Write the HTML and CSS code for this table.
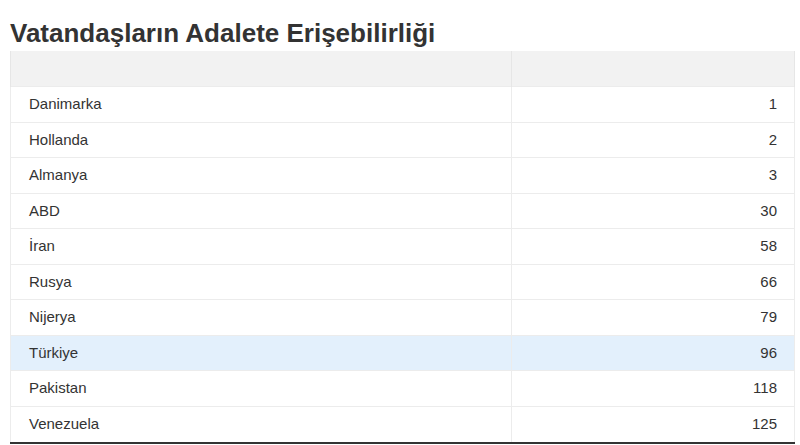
FILE: index.html
```html
<!DOCTYPE html>
<html lang="tr">
<head>
<meta charset="utf-8">
<title>Vatandaşların Adalete Erişebilirliği</title>
<link rel="stylesheet" href="styles.css">
</head>
<body>
<div class="page">
  <h1 class="title">Vatandaşların Adalete Erişebilirliği</h1>
  <table class="data">
    <thead>
      <tr><th></th><th></th></tr>
    </thead>
    <tbody>
      <tr><td>Danimarka</td><td class="num">1</td></tr>
      <tr><td>Hollanda</td><td class="num">2</td></tr>
      <tr><td>Almanya</td><td class="num">3</td></tr>
      <tr><td>ABD</td><td class="num">30</td></tr>
      <tr><td>İran</td><td class="num">58</td></tr>
      <tr><td>Rusya</td><td class="num">66</td></tr>
      <tr><td>Nijerya</td><td class="num">79</td></tr>
      <tr class="hl"><td>Türkiye</td><td class="num">96</td></tr>
      <tr><td>Pakistan</td><td class="num">118</td></tr>
      <tr class="last"><td>Venezuela</td><td class="num">125</td></tr>
    </tbody>
  </table>
</div>
</body>
</html>
```

FILE: styles.css
```css
html, body {
  margin: 0;
  padding: 0;
  background: #ffffff;
}
.page {
  padding: 18px 5px 0 10px;
  font-family: "Liberation Sans", Arial, sans-serif;
  color: #333333;
}
.title {
  margin: 0 0 3px 0;
  font-size: 26px;
  line-height: 30px;
  font-weight: bold;
  color: #333333;
}
.data {
  width: 100%;
  border-collapse: collapse;
  font-size: 15px;
}
.data th {
  height: 35px;
  padding: 0;
  background: #f2f2f2;
  border-left: 1px solid #e6e6e6;
  border-right: 1px solid #e6e6e6;
}
.data th:first-child, .data td:first-child {
  width: 500px;
}
.data td {
  height: 35.5px;
  box-sizing: border-box;
  padding: 0 17px 0 18px;
  border: 1px solid #ececec;
  vertical-align: middle;
  line-height: 18px;
}
.data tr.hl td {
  background: #e3f0fc;
}
.data tr.last td {
  height: 37px;
  border-bottom: 2px solid #333333;
}
.data td.num {
  text-align: right;
}
```
